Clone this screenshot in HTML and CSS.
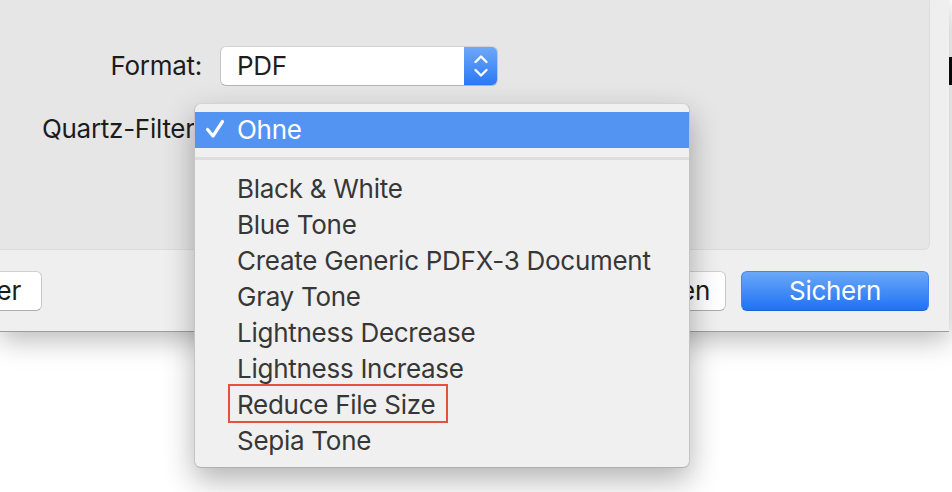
FILE: index.html
```html
<!DOCTYPE html>
<html lang="de">
<head>
<meta charset="utf-8">
<title>Sichern</title>
<link rel="stylesheet" href="styles.css">
</head>
<body>
<div class="page">
  <div class="dialog">
    <div class="group">
      <div class="form">
        <div class="label">Format:</div>
        <div class="popup">
          <span class="popup-value">PDF</span>
          <span class="popup-arrows">
            <svg width="16" height="24" viewBox="0 0 16 24"><path d="M2.5 8 L8 2.5 L13.5 8 M2.5 16 L8 21.5 L13.5 16" fill="none" stroke="#fff" stroke-width="2.4" stroke-linecap="round" stroke-linejoin="round"/></svg>
          </span>
        </div>
        <div class="label">Quartz-Filter:</div>
        <div class="popup-placeholder"></div>
      </div>
    </div>
    <div class="footer">
      <div class="btn btn-left"><span class="btn-text">Neuer Ordner</span></div>
      <div class="footer-right">
        <div class="btn btn-cancel"><span class="btn-text">Abbrechen</span></div>
        <div class="btn btn-default"><span class="btn-text">Sichern</span></div>
      </div>
    </div>
  </div>
  <div class="behind"><div class="behind-mark"></div></div>
</div>

<div class="menu">
  <div class="menu-item selected">
    <svg class="check" width="20" height="20" viewBox="0 0 20 20"><path d="M2.5 10.5 L8 17 L17.5 2.5" fill="none" stroke="#fff" stroke-width="3.2" stroke-linecap="round" stroke-linejoin="round"/></svg>
    <span>Ohne</span>
  </div>
  <div class="menu-sep"></div>
  <div class="menu-item">Black &amp; White</div>
  <div class="menu-item">Blue Tone</div>
  <div class="menu-item">Create Generic PDFX-3 Document</div>
  <div class="menu-item">Gray Tone</div>
  <div class="menu-item">Lightness Decrease</div>
  <div class="menu-item">Lightness Increase</div>
  <div class="menu-item marked">Reduce File Size<span class="mark-box"></span></div>
  <div class="menu-item">Sepia Tone</div>
</div>
</body>
</html>
```

FILE: styles.css
```css
* { box-sizing: border-box; }

html, body {
  margin: 0;
  padding: 0;
  background: #ffffff;
  width: 952px;
  height: 492px;
  overflow: hidden;
  font-family: "Inter", "Liberation Sans", sans-serif;
  font-size: 26px;
  letter-spacing: -0.27px;
}

.page {
  display: flex;
  align-items: flex-start;
}

.dialog {
  width: 949px;
  flex: none;
  height: 332px;
  background: #efefef;
  border-bottom: 1px solid #9d9d9d;
  box-shadow: 0 8px 26px rgba(0, 0, 0, 0.28);
  display: flex;
  flex-direction: column;
}

.group {
  margin-top: -3px;
  width: 930px;
  height: 253px;
  background: #e6e6e6;
  border-right: 1px solid #dcdcdc;
  border-bottom: 1px solid #dcdcdc;
  border-radius: 0 6px 6px 0;
  padding-top: 49px;
}

.form {
  display: grid;
  grid-template-columns: 202px 278px;
  column-gap: 18px;
  row-gap: 23px;
  align-items: center;
}

.label {
  text-align: right;
  color: #1c1c1c;
  line-height: 40px;
}

.popup {
  height: 40px;
  background: #ffffff;
  border: 1px solid #c6c6c6;
  border-top-color: #d2d2d2;
  border-bottom-color: #b4b4b4;
  border-radius: 6px;
  display: flex;
  align-items: stretch;
  overflow: hidden;
}

.popup-value {
  flex: 1;
  padding-left: 16px;
  line-height: 38px;
  color: #1e1e1e;
}

.popup-arrows {
  width: 33px;
  background: linear-gradient(#6ea9f8, #2a78f4);
  display: flex;
  align-items: center;
  justify-content: center;
}

.popup-placeholder {
  height: 40px;
}

.footer {
  flex: 1;
  display: flex;
  align-items: center;
  padding-right: 20px;
}

.btn {
  flex: none;
  height: 40px;
  color: #1c1c1c;
  background: #ffffff;
  border: 1px solid #c8c8c8;
  border-top-color: #d0d0d0;
  border-bottom-color: #adadad;
  border-radius: 6px;
  padding: 0 16px;
  display: flex;
  align-items: center;
  white-space: nowrap;
}

.btn-left {
  width: 240px;
  margin-left: -198px;
  justify-content: flex-end;
  padding-right: 20px;
}

.footer-right {
  margin-left: auto;
  display: flex;
  gap: 15px;
}

.btn-cancel {
  width: 170px;
  justify-content: flex-end;
  padding-right: 15px;
}

.btn-default {
  width: 188px;
  justify-content: center;
  color: #ffffff;
  background: linear-gradient(#6ba8f8, #1f72f5);
  border-color: #3f86f2;
  border-bottom-color: #1a62d8;
}

.behind {
  flex: none;
  width: 3px;
  padding-top: 57px;
}

.behind-mark {
  height: 28px;
  background: #0a0a0a;
}

.menu {
  position: absolute;
  left: 194px;
  top: 103px;
  width: 496px;
  background: #f0f0f0;
  border: 1px solid #c4c4c4;
  border-top-color: #d4d4d4;
  border-bottom-color: #b0b0b0;
  border-radius: 7px;
  padding: 8px 0;
  box-shadow: 0 12px 30px rgba(0, 0, 0, 0.3);
}

.menu-item {
  position: relative;
  height: 36px;
  line-height: 36px;
  padding-left: 42px;
  color: #373737;
  white-space: nowrap;
}

.menu-item.selected {
  background: #5394f3;
  color: #ffffff;
  display: flex;
  align-items: center;
}

.check {
  position: absolute;
  left: 10px;
  top: 7px;
}

.menu-sep {
  height: 3px;
  background: #dedede;
  margin: 9px 0 11px;
}

.mark-box {
  position: absolute;
  left: 33px;
  top: -3px;
  width: 220px;
  height: 39px;
  border: 2px solid #e5503f;
}
```
